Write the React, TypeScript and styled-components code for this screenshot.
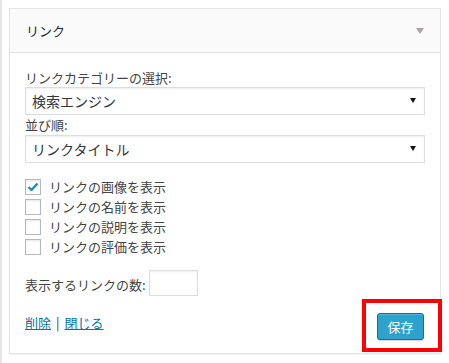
import React from "react";
import styled, { createGlobalStyle } from "styled-components";

const Global = createGlobalStyle`
  html, body { margin: 0; padding: 0; background: #fff; }
  body { font-family: "Noto Sans CJK JP", "Noto Sans", sans-serif; color: #444; }
  * { box-sizing: border-box; }
`;

const Page = styled.div`
  position: relative;
  width: 449px;
  height: 363px;
  border-left: 2px solid #e5e5e5;
  padding: 8px 0 0 7px;
`;

const Panel = styled.div`
  width: 432px;
  border: 1px solid #e5e5e5;
  background: #fff;
  box-shadow: 0 1px 1px rgba(0, 0, 0, 0.04);
`;

const Header = styled.div`
  height: 44px;
  background: #fafafa;
  border-bottom: 1px solid #e5e5e5;
  display: flex;
  align-items: center;
  justify-content: space-between;
  padding: 0 16px 0 16px;
`;

const Title = styled.h3`
  margin: 0;
  font-size: 13px;
  font-weight: 400;
  color: #23282d;
  line-height: 20px;
`;

const Body = styled.div`
  padding: 15px 15px 13px 15px;
  display: flex;
  flex-direction: column;
`;

const Label = styled.label`
  font-size: 13px;
  line-height: 19px;
  display: block;
  height: ${(p: { h?: number }) => p.h ?? 19}px;
`;

const SelectWrap = styled.div`
  position: relative;
  width: 400px;
  height: 28px;
`;

const Select = styled.select`
  appearance: none;
  -webkit-appearance: none;
  width: 100%;
  height: 100%;
  border: 1px solid #ddd;
  background: #fff;
  box-shadow: inset 0 1px 2px rgba(0, 0, 0, 0.07);
  font-family: inherit;
  font-size: 14px;
  color: #32373c;
  padding: 0 24px 0 6px;
  margin: 0;
  border-radius: 0;
  outline: none;
`;

const Arrow = styled.svg`
  position: absolute;
  right: 9px;
  top: 11px;
  pointer-events: none;
`;

const CheckList = styled.div`
  margin-top: 16px;
  display: flex;
  flex-direction: column;
  gap: 4px;
`;

const CheckRow = styled.label`
  display: flex;
  align-items: center;
  gap: 8px;
  height: 16px;
  font-size: 13px;
  line-height: 16px;
`;

const Box = styled.span`
  width: 16px;
  height: 16px;
  border: 1px solid #b4b9be;
  background: #fff;
  box-shadow: inset 0 1px 2px rgba(0, 0, 0, 0.1);
  display: flex;
  align-items: center;
  justify-content: center;
  flex: none;
`;

const CountRow = styled.div`
  margin-top: 15px;
  display: flex;
  align-items: center;
  gap: 3px;
  font-size: 13px;
`;

const NumInput = styled.input`
  width: 49px;
  height: 26px;
  border: 1px solid #ddd;
  box-shadow: inset 0 1px 2px rgba(0, 0, 0, 0.07);
  margin: 0 0 2px 0;
  padding: 0 4px;
  font-family: inherit;
  outline: none;
`;

const Footer = styled.div`
  margin-top: 15px;
  display: flex;
  justify-content: space-between;
  align-items: flex-start;
`;

const Links = styled.div`
  font-size: 13px;
  line-height: 19px;
  color: #444;
  display: flex;
  gap: 5px;
`;

const Link = styled.a`
  color: #0073aa;
  text-decoration: underline;
`;

const SaveButton = styled.button`
  width: 47px;
  height: 27px;
  margin-right: 1px;
  background: #2ea2cc;
  border: 1px solid #0074a2;
  border-radius: 3px;
  box-shadow: inset 0 1px 0 rgba(120, 200, 230, 0.5), 0 1px 0 rgba(0, 0, 0, 0.15);
  color: #fff;
  font-family: inherit;
  font-size: 13px;
  line-height: 25px;
  padding: 0;
`;

const Highlight = styled.div`
  position: absolute;
  left: 360px;
  top: 299px;
  width: 80px;
  height: 53px;
  border: 4px solid #ff0000;
  pointer-events: none;
`;

const DropArrow = () => (
  <Arrow width="6" height="5" viewBox="0 0 6 5">
    <path d="M0 0 H6 L3 5 Z" fill="#111" />
  </Arrow>
);

const Check = () => (
  <svg width="12" height="10" viewBox="0 0 12 10">
    <path d="M1.5 5 L4.5 8 L10.5 1.5" fill="none" stroke="#1e8cbe" strokeWidth="2.4" strokeLinejoin="round" />
  </svg>
);

const options = [
  { text: "リンクの画像を表示", checked: true },
  { text: "リンクの名前を表示", checked: false },
  { text: "リンクの説明を表示", checked: false },
  { text: "リンクの評価を表示", checked: false },
];

export default function App() {
  return (
    <>
      <Global />
      <Page>
        <Panel>
          <Header>
            <Title>リンク</Title>
            <svg width="8" height="6" viewBox="0 0 8 6">
              <path d="M0 0 H8 L4 6 Z" fill="#a8a4aa" />
            </svg>
          </Header>
          <Body>
            <Label>リンクカテゴリーの選択:</Label>
            <SelectWrap>
              <Select defaultValue="search">
                <option value="search">検索エンジン</option>
              </Select>
              <DropArrow />
            </SelectWrap>
            <Label h={20}>並び順:</Label>
            <SelectWrap>
              <Select defaultValue="title">
                <option value="title">リンクタイトル</option>
              </Select>
              <DropArrow />
            </SelectWrap>
            <CheckList>
              {options.map((o) => (
                <CheckRow key={o.text}>
                  <Box>{o.checked && <Check />}</Box>
                  {o.text}
                </CheckRow>
              ))}
            </CheckList>
            <CountRow>
              表示するリンクの数:
              <NumInput type="text" />
            </CountRow>
            <Footer>
              <Links>
                <Link href="#">削除</Link>
                <span>|</span>
                <Link href="#">閉じる</Link>
              </Links>
              <SaveButton>保存</SaveButton>
            </Footer>
          </Body>
        </Panel>
        <Highlight />
      </Page>
    </>
  );
}
